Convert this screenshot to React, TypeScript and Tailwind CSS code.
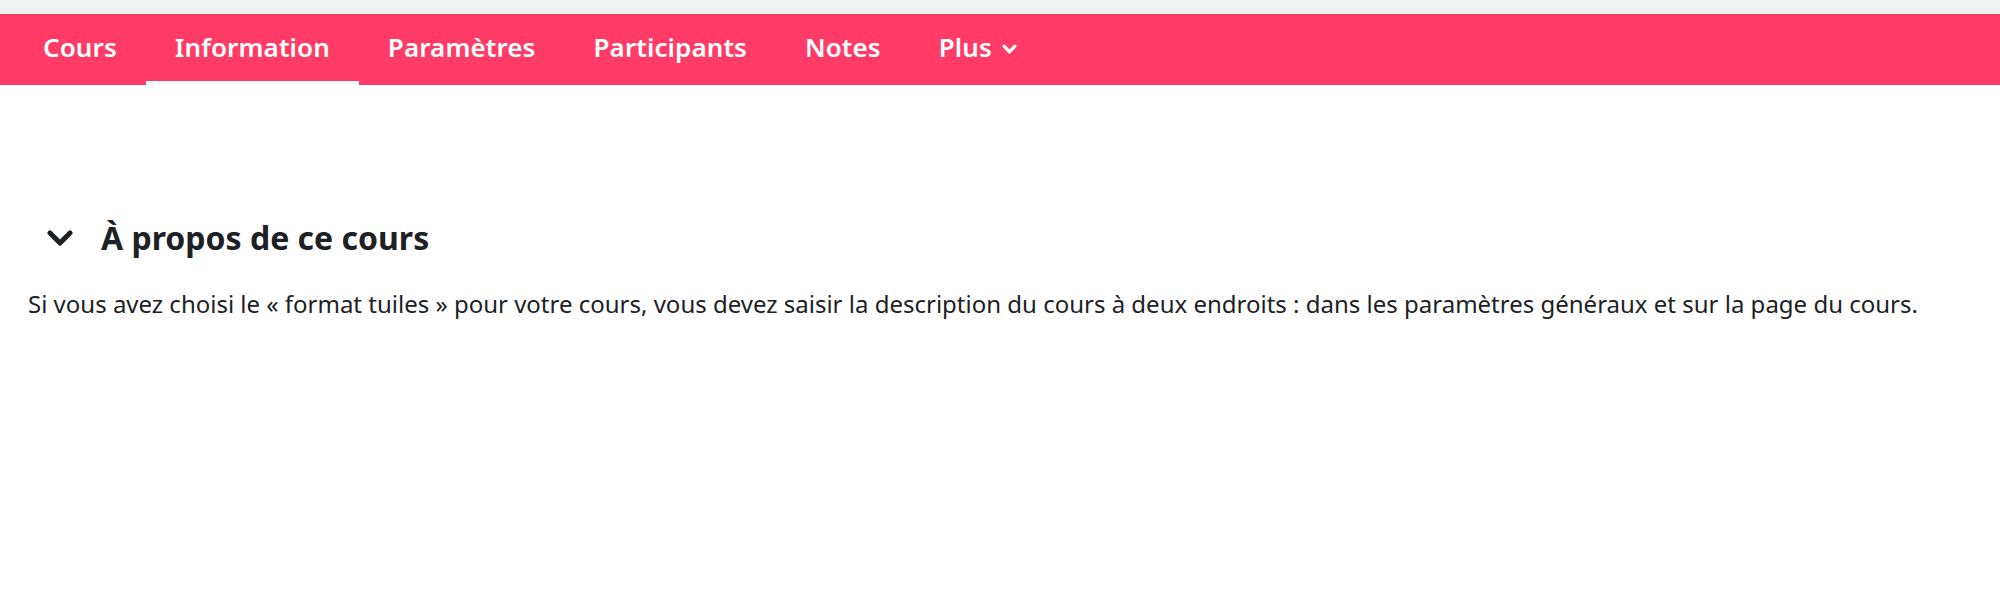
const tabs = ['Cours', 'Information', 'Paramètres', 'Participants', 'Notes']

function Chevron({ w, h, sw }: { w: number; h: number; sw: number }) {
  return (
    <svg width={w} height={h} viewBox={`0 0 ${w} ${h}`} fill="none">
      <polyline
        points={`${sw / 2 + 0.5},${sw / 2 + 0.5} ${w / 2},${h - sw / 2 - 0.5} ${w - sw / 2 - 0.5},${sw / 2 + 0.5}`}
        stroke="currentColor"
        strokeWidth={sw}
        strokeLinecap="round"
        strokeLinejoin="round"
      />
    </svg>
  )
}

export default function App() {
  return (
    <div className="min-h-[591px] w-full bg-white text-[#1d2125] [font-family:'Noto_Sans',Roboto,sans-serif]">
      <div className="h-[14px] bg-[#f1f2f3]" />
      <nav className="flex h-[71px] items-stretch bg-[#ff3b66] pl-[14px]">
        {tabs.map((t) => (
          <div
            key={t}
            className={
              'flex items-center px-[29px] text-[26px] font-semibold tracking-[0.1px] text-white ' +
              (t === 'Information' ? 'border-b-[4px] border-[#f8f9fa]' : 'pb-[4px]')
            }
          >
            {t}
          </div>
        ))}
        <div className="flex items-center gap-[10px] px-[29px] pb-[4px] text-[26px] font-semibold tracking-[0.1px] text-white">
          Plus
          <span className="pt-[3px]">
            <Chevron w={15} h={10} sw={3.2} />
          </span>
        </div>
      </nav>

      <section className="px-[28px] pt-[137px]">
        <div className="flex items-center gap-[28px] pl-[19px]">
          <Chevron w={26} h={16} sw={5} />
          <h3 className="text-[32px] font-bold leading-none">À propos de ce cours</h3>
        </div>
        <p className="mt-[32px] text-[24px] leading-[1.5]">
          Si vous avez choisi le « format tuiles » pour votre cours, vous devez saisir la description du cours à deux endroits : dans les paramètres généraux et sur la page du cours.
        </p>
      </section>
    </div>
  )
}
